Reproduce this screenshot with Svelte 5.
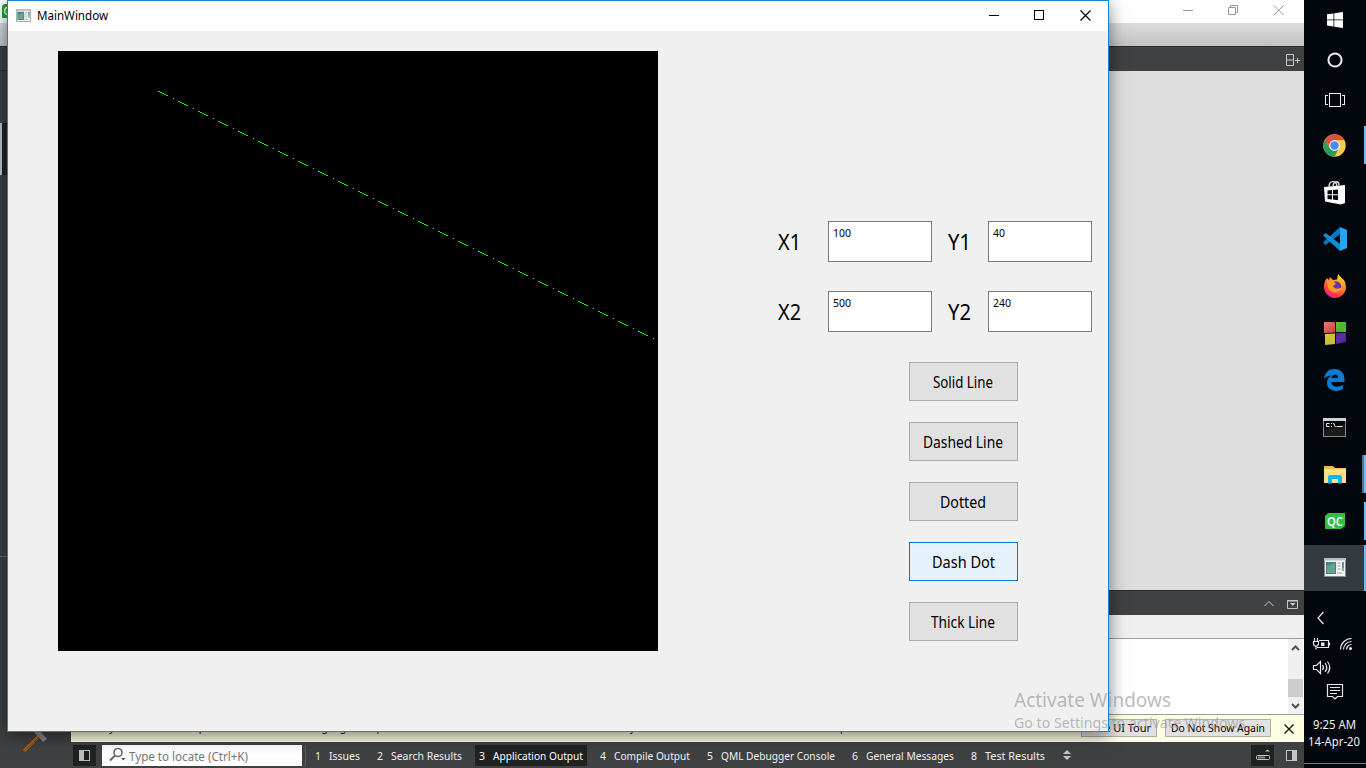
<script>
  const dashes = Array.from({ length: 25 }, (_, i) => i);
  const rows = [
    [{ name: 'X1', value: '100', w: 18 }, { name: 'Y1', value: '40', w: 12 }],
    [{ name: 'X2', value: '500', w: 18 }, { name: 'Y2', value: '240', w: 18 }],
  ];
  const modes = [
    { name: 'Solid Line', w: 60 },
    { name: 'Dashed Line', w: 80 },
    { name: 'Dotted', w: 46 },
    { name: 'Dash Dot', w: 63, hot: true },
    { name: 'Thick Line', w: 64 },
  ];
  const panes = [
    { n: '1', name: 'Issues', w: 31, slot: 32 },
    { n: '2', name: 'Search Results', w: 71, slot: 72 },
    { n: '3', name: 'Application Output', w: 90, slot: 91, on: true },
    { n: '4', name: 'Compile Output', w: 76, slot: 77 },
    { n: '5', name: 'QML Debugger Console', w: 114, slot: 115 },
    { n: '6', name: 'General Messages', w: 88, slot: 89 },
    { n: '8', name: 'Test Results', w: 60, slot: 60 },
  ];
  const apps = ['chrome', 'store', 'code', 'firefox', 'tiles', 'edge', 'cmd', 'folder', 'qc', 'window'];
  const running = { chrome: 1, folder: 2, qc: 1, window: 1 };
</script>

{#snippet label(text, w, size, h, base, slot = w)}
  <svg class="label" width={slot} height={h}><text x="0" y={base} font-size={size} textLength={w} lengthAdjust="spacingAndGlyphs">{text}</text></svg>
{/snippet}

{#snippet appWindow(w, h)}
  <svg width={w} height={h} viewBox="0 0 22 19">
    <rect x=".5" y=".5" width="21" height="18" fill="#f4f4f4" stroke="#8a8d90" />
    <rect x="0" y="0" width="22" height="2.5" fill="#b9bcbf" />
    <rect x="2" y="4" width="10" height="12" fill="#477f93" />
    <path d="M3 15V8l8-3v10z" fill="#64a48a" />
    <path d="M13.5 5h3M13.5 8h3M13.5 11h3M13 15h5" stroke="#cbcbcb" stroke-width="2" />
    <path d="M19 4v6" stroke="#3564ad" stroke-width="1.5" />
    <path d="M19 10v3" stroke="#58a65c" stroke-width="1.5" />
  </svg>
{/snippet}

<div class="desktop">
  <section class="creator">
    <div class="caption">
      <svg class="qc-edge" width="7" height="14"><path d="M2 2l2-2h3v14H2z" fill="#22a43a" /><path d="M7 3.5C4 4 4 10 7 10.5" fill="none" stroke="#e8ffe9" stroke-width="1.4" /></svg>
      <svg width="116" height="23" fill="none" stroke="#999">
        <path d="M3 10.500h10M48.500 7.500h7v7h-7zM50.500 7v-1.500h7v7h-1.500M94 5.500l9.500 9.500M103.500 5.500l-9.500 9.500" />
      </svg>
    </div>
    <div class="menu"></div>
    <div class="body">
      <aside>
        <div class="top-mark"></div>
        <div class="active-mode"></div>
        <div class="mode-line"></div>
        <svg class="hammer" width="26" height="30"><path d="M2 27L17 12" stroke="#bd6815" stroke-width="3" /><path d="M12 8l4-4 9 11-4 3z" fill="#85878a" /><path d="M1 28l16-15" stroke="#774112" /></svg>
      </aside>
      <main>
        <div class="editor-bar">
          <svg width="18" height="14" fill="none" stroke="#c8c8c8"><path d="M2.500 1.500h7v11h-7zM2.500 7h7M11 7.500h5M13.500 5v5" /></svg>
        </div>
        <div class="editor"></div>
        <div class="output-bar">
          <svg width="40" height="14" fill="none" stroke="#c8c8c8"><path d="M4.500 9l4.500-4.500L13.500 9M27.500 3.500h10v8h-10zM27 4h11" /><path d="M30 6h5.500l-2.700 3z" fill="#c8c8c8" stroke="none" /></svg>
        </div>
        <div class="output-tabs"></div>
        <div class="output">
          <div class="scroll">
            <svg width="15" height="75" fill="none" stroke="#505050" stroke-width="2"><path d="M4 11l3.500-3.500L11 11M4 65l3.500 3.500L11 65" /></svg>
            <div class="thumb"></div>
          </div>
        </div>
        <div class="tour">
          <div class="tour-text">{@render label('Would you like to take a quick UI tour? This tour highlights important user interface elements and shows how they are used. To take the tour later, select Help > UI Tour.', 820, 11, 20, 15.5)}</div>
          <button>{@render label('Take UI Tour', 64, 11.500, 16, 12)}</button>
          <button class="never">{@render label('Do Not Show Again', 94, 11.500, 16, 12)}</button>
          <svg class="dismiss" width="12" height="12" fill="none" stroke="#111" stroke-width="1.300"><path d="M1.500 1.500l9 9M10.500 1.500l-9 9" /></svg>
        </div>
        <footer>
          <div class="side"><svg width="11" height="11"><rect width="11" height="11" fill="#b9bcbc" /><rect x="5" y="1" width="5" height="9" fill="#1c1e1e" /></svg></div>
          <div class="locator">
            <svg width="17" height="16" fill="none" stroke="#666"><circle cx="9" cy="5.500" r="4" stroke-width="1.600" /><path d="M6 8.500L1 13.500" stroke-width="2" /><path d="M12 11h4.500l-2.200 2.500z" fill="#555" stroke="none" /></svg>
            {@render label('Type to locate (Ctrl+K)', 119, 12.500, 20, 15.5)}
          </div>
          <i></i>
          <nav>
            {#each panes as p}
              <div class="pane" class:on={p.on}>{@render label(p.n, 6, 11.500, 20, 15)}{@render label(p.name, p.w, 11.500, 20, 15, p.slot)}</div>
            {/each}
          </nav>
          <svg class="updown" width="8" height="12" fill="#c4c4c4"><path d="M0 5l4-4 4 4zM0 7l4 4 4-4z" /></svg>
          <div class="progress"><svg width="14" height="12"><rect x=".5" y="6.500" width="13" height="4" rx="1" fill="none" stroke="#c4c4c4" /><path d="M2 8.500h7" stroke="#888" stroke-width="2" /><path d="M9 2.500l2.500-2 2.500 2z" fill="#c4c4c4" /></svg></div>
          <svg class="right-side" width="11" height="11"><rect x=".5" y=".5" width="10" height="10" fill="#37393a" stroke="#c4c4c4" /><rect x="6" width="5" height="11" fill="#c4c4c4" /></svg>
        </footer>
      </main>
    </div>
  </section>

  <section class="dialog">
    <header>
      {@render appWindow(15, 13)}
      <span class="name">{@render label('MainWindow', 71, 12.300, 20, 14)}</span>
      <svg class="controls" width="104" height="14" fill="none" stroke="#000" shape-rendering="crispEdges">
        <path d="M1 7.500h10M46.500 2.500h9v9h-9z" /><path d="M92.500 2.500l10 10M102.500 2.500l-10 10" shape-rendering="auto" stroke-width="1.200" />
      </svg>
    </header>
    <div class="content">
      <svg class="canvas" width="600" height="600" shape-rendering="crispEdges">
        <rect width="600" height="600" />
        <g fill="#00ff00">
          {#each dashes as d}
            {#each [0, 1, 2, 3, 4] as s}
              <rect x={100 + d * 20 + s * 2} y={40 + d * 10 + s} width="2" height="1" />
            {/each}
            <rect x={115 + d * 20} y={47 + d * 10} width="1" height="1" />
          {/each}
        </g>
      </svg>
      <div class="form">
        {#each rows as row}
          <div class="row">
            {#each row as f}
              <div class="field">
                {@render label(f.name, 23, 22, 30, 23)}
                <div class="input">{@render label(f.value, f.w, 11.300, 16, 12)}</div>
              </div>
            {/each}
          </div>
        {/each}
        <div class="modes">
          {#each modes as m}
            <button class:hot={m.hot}>{@render label(m.name, m.w, 15.500, 24, 18, m.w + 1)}</button>
          {/each}
        </div>
      </div>
    </div>
  </section>

  <div class="activate">
    {@render label('Activate Windows', 157, 20, 26, 20)}
    {@render label('Go to Settings to activate Windows.', 235, 14.500, 20, 15)}
  </div>

  <aside class="taskbar">
    <div class="sys"><svg width="16" height="16" fill="#fff"><path d="M0 2.300L6.500 1.400v6.100H0zM7.300 1.200L16 0v7.500H7.300zM0 8.300h6.500v6.200L0 13.600zM7.300 8.300H16V16l-8.700-1.300z" /></svg></div>
    <div class="sys"><svg width="16" height="16"><circle cx="8" cy="8" r="6.600" fill="none" stroke="#eee" stroke-width="2" /></svg></div>
    <div class="sys"><svg width="20" height="16" fill="none" stroke="#eee" shape-rendering="crispEdges"><path d="M4.500 1.500h11v13h-11zM3 3.500H.5v9H3M17 3.500h2.500v9H17" /></svg></div>
    {#each apps as app}
      <div class="app" class:current={app === 'window'}>
        {#if app === 'chrome'}
          <svg width="23" height="23" viewBox="-11.500 -11.500 23 23"><circle r="11.200" fill="#fccb45" /><path d="M-9.700-5.600A11.200 11.200 0 0 1 9.700-5.600L0-5.200-4.500 2.600z" fill="#d94f42" /><path d="M-9.700-5.600A11.200 11.200 0 0 0 0 11.200L4.500 2.600 0 5.200-4.500 2.600z" fill="#2a9d5a" /><circle r="5.400" fill="#f3f3ed" /><circle r="4.200" fill="#4a8af4" /></svg>
        {:else if app === 'store'}
          <svg width="22" height="25" viewBox="0 0 22 25"><path d="M0 7l21-2v18l-4 1.500L1 21.500z" fill="#fff" /><path d="M5 7c0-7 7-7 8-1M9 6c1-6 6-5 6-1" fill="none" stroke="#ddd" stroke-width="1.400" /><path d="M3.500 10.500l4.500-.5v4.200H3.500zM9 9.900l5-.5v4.800H9zM3.500 15.200H8v4.200l-4.500-.5zM9 15.200h5v5l-5-.7z" fill="#02070d" /></svg>
        {:else if app === 'code'}
          <svg width="24" height="24" viewBox="0 0 24 24"><path d="M17 0L0 15.500 2.500 18 18 6.500z" fill="#0878bd" /><path d="M0 8.500L2.500 6 18 17.500 17 24z" fill="#168bd1" /><path d="M17 0l7 3v18l-7 3z" fill="#29a5ed" /></svg>
        {:else if app === 'firefox'}
          <svg width="24" height="24" viewBox="0 0 24 24"><defs><linearGradient id="fx" x1=".8" y1="0" x2=".3" y2="1"><stop offset="0" stop-color="#ffe542" /><stop offset=".45" stop-color="#ff8b22" /><stop offset=".8" stop-color="#ff3650" /><stop offset="1" stop-color="#e32088" /></linearGradient></defs><path d="M2 7l2-3 2 2 1-3 3 3 4-.5L15 0c3 4 6 5 7 8l1 5c0 6-5 11-11 11S1 19 1 13c0-3 .5-4 1-6z" fill="url(#fx)" /><circle cx="13" cy="12.500" r="5.300" fill="#6736a8" /><path d="M4 8l6-1 3 3-3 2c2 4 6 3 9 1-2 7-11 7-14 1z" fill="#ff9a22" /></svg>
        {:else if app === 'tiles'}
          <svg width="22" height="24"><defs><linearGradient id="shade" x2="1" y2="1"><stop offset="0" stop-color="#fff" stop-opacity=".35" /><stop offset=".5" stop-color="#fff" stop-opacity="0" /><stop offset="1" stop-color="#000" stop-opacity=".3" /></linearGradient></defs><path d="M0 1h11v10.500L0 12z" fill="#d23a2b" /><path d="M12 1h10v10H12z" fill="#4db52b" /><path d="M1 13l10-.5V23l-10 1z" fill="#c9bf32" /><path d="M12 12h10v9l-10 2z" fill="#5220a9" /><path d="M0 1h11v10.500L0 12zM12 1h10v10H12zM1 13l10-.5V23l-10 1zM12 12h10v9l-10 2z" fill="url(#shade)" /></svg>
        {:else if app === 'edge'}
          <svg width="21" height="22" viewBox="0 0 21 22"><path d="M0 10C1 3 5 0 10.500 0 17 0 20.500 4 20.500 11v2H7c.5 5 7 6 12 3v4c-7 4-16 1.500-16-6 0-4 2-6 4.500-7.500C4 6.500 2 8 0 10zM7.500 9H14c0-5-6-4.500-6.500 0z" fill="#0b7bd8" fill-rule="evenodd" /></svg>
        {:else if app === 'cmd'}
          <svg width="23" height="19"><rect x=".5" y=".5" width="22" height="18" fill="#080808" stroke="#82898c" /><path d="M0 1.500h23" stroke="#ccd3d5" stroke-width="3" /><path d="M1 12l21-6v12H1z" fill="#fff" opacity=".08" /><path d="M6.500 5.500H3.500v3h3M8.500 5v1M8.500 8v1M10.500 5l2 4M13.500 8.500h6" fill="none" stroke="#eee" /></svg>
        {:else if app === 'folder'}
          <svg width="22" height="19"><path d="M0 1h9l2 2h11v15H0z" fill="#edbd4b" /><path d="M0 4h22v14H0z" fill="#fee08b" /><path d="M4 18.500v-6.500q0-2 2-2h10q2 0 2 2v6.500h-4v-4.500H8v4.500z" fill="#12b7f2" /></svg>
        {:else if app === 'qc'}
          <svg width="20" height="17"><path d="M0 3l3-3h17v13l-4 3H0z" fill="#34bd42" /><text x="2" y="12.500" fill="#f2fff2" font-size="12" font-weight="600" textLength="16" lengthAdjust="spacingAndGlyphs">QC</text></svg>
        {:else}
          {@render appWindow(22, 19)}
        {/if}
        {#if running[app]}<b class:double={running[app] === 2}></b>{/if}
      </div>
    {/each}
    <div class="tray">
      <svg width="62" height="112" fill="none" stroke="#e8e8e8" stroke-width="1.200">
        <path d="M19.500 21L14 27l5.500 6" />
        <path d="M15 49.500h9.500v7H13M25.500 51.500v3M9.500 50.500h5v2q0 2.500-2.500 2.500t-2.500-2.500zM10.500 47v3M13.500 47v3M12 55v3.500" /><path d="M17 51.500h3.500V55H17z" fill="#eee" stroke="none" />
        <path d="M36.500 58.500a11 11 0 0 1 11-11M39.500 58.500a8 8 0 0 1 8-8M42.500 58.500a5 5 0 0 1 5-5" /><circle cx="46.500" cy="57.500" r="1.500" fill="#eee" stroke="none" />
        <path d="M9.500 74.500h3l4-4v12l-4-4h-3zM18.500 74q2 2.500 0 5M21 72q3.500 4.500 0 9M23.500 70.500q4.500 6 0 12" />
        <path d="M23.500 93.500h15v12h-5l-2.500 2.500-2.500-2.500h-5zM26 96.500h10M26 99.500h10M26 102.500h7" />
      </svg>
      <div class="clock">{@render label('9:25 AM', 43, 12.300, 17, 13, 45)}{@render label('14-Apr-20', 52, 12.300, 17, 13, 54)}</div>
    </div>
  </aside>
</div>

<style>
  :global(body) { overflow: hidden; }
  .desktop { position: relative; display: flex; width: 1366px; height: 768px; overflow: hidden; font-family: "Noto Sans", sans-serif; background: #02070d; }
  .desktop :global(*) { box-sizing: border-box; }
  svg { display: block; flex: none; }
  .label { overflow: visible; fill: currentColor; }
  button { font: inherit; padding: 0; display: flex; align-items: center; justify-content: center; color: #000; background: #e1e1e1; border: 1px solid #adadad; border-radius: 0; }
  .creator { width: 1304px; height: 768px; display: flex; flex-direction: column; background: #404142; }
  .caption { height: 23px; background: #fff; display: flex; justify-content: space-between; padding-right: 8px; }
  .qc-edge { margin-top: 4px; }
  .menu { height: 23px; background: linear-gradient(#dcdcdc, #c2c2c2); }
  .body { flex: 1; display: flex; min-height: 0; }
  .body > aside { width: 71px; display: flex; flex-direction: column; border-top: 1px solid #2b2c2c; }
  .top-mark { height: 24px; border-bottom: 1px solid #2b2c2c; }
  .active-mode { height: 52px; margin-top: 52px; background: #222424; border-left: 2px solid #c0c2c0; }
  .mode-line { height: 1px; margin-top: 381px; background: #666; }
  .hammer { margin: 167px 0 0 22px; }
  .body main { flex: 1; display: flex; flex-direction: column; min-width: 0; }
  .editor-bar { height: 25px; border-top: 1px solid #2b2c2c; display: flex; justify-content: flex-end; align-items: center; padding: 1px 2px 0 0; }
  .editor { height: 519px; background: #ddd; }
  .output-bar { height: 25px; border-top: 1px solid #2b2c2c; display: flex; justify-content: flex-end; align-items: center; padding: 1px 4px 0 0; }
  .output-tabs { height: 23px; background: #efefef; }
  .output { height: 77px; border: solid #9d9d9d; border-width: 1px 0; background: #fff; display: flex; justify-content: flex-end; padding-right: 1px; }
  .scroll { width: 15px; background: #f0f0f0; display: grid; }
  .scroll > * { grid-area: 1 / 1; }
  .thumb { height: 18px; margin-top: 40px; background: #cdcdcd; }
  .tour { height: 27px; background: #ffffe1; border-bottom: 1px solid #fff; display: flex; align-items: flex-start; font-size: 11px; color: #111; }
  .tour-text { width: 1010px; padding-left: 4px; }
  .tour button { width: 76px; height: 18px; margin-top: 4px; }
  .tour button.never { width: 106px; margin-left: 8px; }
  .dismiss { margin: 8px 0 0 12px; }
  footer { height: 26px; display: flex; align-items: center; padding-left: 2px; color: #f2f2f2; }
  .side, .progress { width: 23px; height: 21px; display: flex; align-items: center; justify-content: center; background: #202222; }
  .side { padding-right: 1px; }
  .locator { width: 200px; height: 21px; margin-left: 6px; padding-left: 7px; display: flex; align-items: center; gap: 3px; background: #fff; color: #777; }
  footer i { width: 1px; height: 21px; margin-left: 3px; background: #606162; }
  nav { display: flex; gap: 9px; margin-left: 5px; }
  .pane { height: 21px; padding: 0 3px 0 4px; display: flex; gap: 8px; }
  .pane.on { background: #202222; color: #fff; }
  .updown { margin-left: 15px; }
  .progress { margin-left: auto; }
  .right-side { margin: 0 7px 0 12px; }

  .dialog { position: absolute; left: 7px; top: 0; width: 1102px; height: 732px; border: 1px solid #1883d7; background: #f0f0f0; box-shadow: 0 4px 16px rgba(0, 0, 0, .5); }
  .dialog header { height: 30px; display: flex; align-items: center; padding: 0 16px 2px 8px; background: #fff; }
  .name { margin: 1px 0 0 6px; }
  .controls { margin-left: auto; }
  .content { display: flex; padding: 20px 0 0 50px; }
  .form { padding: 170px 0 0 120px; }
  .row { display: flex; gap: 16px; height: 41px; margin-bottom: 29px; }
  .field { display: flex; align-items: center; width: 154px; justify-content: space-between; }
  .field:last-child { width: 144px; }
  .input { width: 104px; height: 41px; padding: 3px 0 0 4px; border: 1px solid #7a7a7a; background: #fff; }
  .modes { display: flex; flex-direction: column; gap: 21px; padding: 1px 0 0 131px; }
  .modes button { width: 109px; height: 39px; }
  .modes button.hot { background: #e5f1fb; border-color: #0078d7; }
  .activate { position: absolute; left: 1014px; top: 687px; color: rgba(145, 145, 145, .62); }

  .taskbar { width: 62px; height: 768px; display: flex; flex-direction: column; background: #02070d; color: #f2f2f2; }
  .sys { height: 40px; display: grid; place-items: center; }
  .sys + .app { margin-top: 1px; }
  .app { height: 47px; display: grid; place-items: center; padding: 1px 1px 0 0; position: relative; }
  .app.current { background: #343a40; margin-top: 1px; height: 46px; padding: 0 1px 1px 0; }
  .app b { position: absolute; right: 0; top: 5px; width: 2px; height: 38px; background: #76b9ed; }
  .app b.double { width: 4px; border-left: 2px solid #4d7799; border-right: 1px solid #76b9ed; }
  .app.current b { top: 0; height: 46px; }
  .tray { height: 177px; }
  .clock { display: flex; flex-direction: column; align-items: center; padding-top: 13px; height: 61px; border-bottom: 1px solid #77797c; }
</style>
